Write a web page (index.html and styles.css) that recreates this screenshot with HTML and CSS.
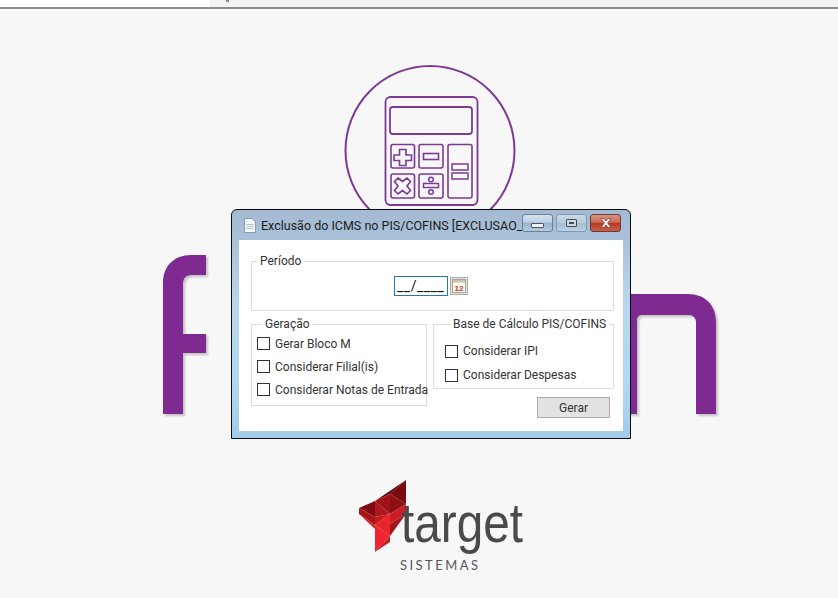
FILE: index.html
```html
<!DOCTYPE html>
<html lang="pt-BR">
<head>
<meta charset="utf-8">
<title>Exclusão do ICMS no PIS/COFINS</title>
<link rel="stylesheet" href="styles.css">
</head>
<body>
<div class="topbar"><div class="topbar-white"></div><div class="topbar-rest"><span class="topbar-mark"></span></div></div>
<svg class="backdrop" width="838" height="598" viewBox="0 0 838 598">
  <defs>
    <filter id="soft" x="-10%" y="-10%" width="125%" height="125%">
      <feDropShadow dx="2" dy="2" stdDeviation="1.2" flood-color="#000" flood-opacity=".22"/>
    </filter>
  </defs>
  <g fill="#7f2a90" filter="url(#soft)">
    <path d="M163 414V283C163 266 174 255 191 255H206V275H192C186 275 183 278 183 284V334H206V353H183V414Z"/>
    <path d="M600 294H688C705 294 716 305 716 322V414H696V322C696 318 693 315 689 315H642C639 315 637 317 637 320V414H600Z"/>
  </g>
  <g fill="none" stroke="#7c3a94">
    <circle cx="430" cy="150.5" r="84.5" stroke-width="2"/>
    <rect x="385.500" y="97" width="92" height="108" rx="5" stroke-width="1.800"/>
    <rect x="390" y="107" width="82" height="27" rx="3" stroke-width="1.800"/>
    <rect x="391" y="144.500" width="23.500" height="23.500" rx="2" stroke-width="1.600"/>
    <rect x="419" y="144.500" width="24" height="23.500" rx="2" stroke-width="1.600"/>
    <rect x="448" y="144.500" width="24" height="53.500" rx="2" stroke-width="1.600"/>
    <rect x="391" y="174" width="23.500" height="24" rx="2" stroke-width="1.600"/>
    <rect x="419" y="174" width="24" height="24" rx="2" stroke-width="1.600"/>
    <path d="M399.500 149.500h6.500v5.500h5.500v5.500h-5.500v5h-6.500v-5h-5.500v-5.500h5.500z" stroke-width="1.600"/>
    <rect x="423.500" y="153.500" width="15" height="6" stroke-width="1.600"/>
    <rect x="452" y="164" width="16" height="6" stroke-width="1.500"/>
    <rect x="452" y="173" width="16" height="6" stroke-width="1.500"/>
    <path d="M398 178l4.500 3.500 4.500-3.500 3.500 3.500-3.500 4.500 3.500 4.500-3.500 3.500-4.500-3.500-4.500 3.500-3.500-3.500 3.500-4.500-3.500-4.500z" stroke-width="1.600"/>
    <rect x="423.500" y="183.500" width="15" height="4" stroke-width="1.500"/>
    <circle cx="431" cy="179.500" r="2.300" stroke-width="1.500"/>
    <circle cx="431" cy="192" r="2.300" stroke-width="1.500"/>
  </g>
  <g>
    <path fill="#7a0a10" d="M406 480V504L390 494Z"/>
    <path fill="#8e0f14" d="M390 494L406 504L390 514Z"/>
    <path fill="#5c0a10" d="M390 494L406 480L375 501Z"/>
    <path fill="#a01218" d="M375 501L390 494V514Z"/>
    <path fill="#7b0c12" d="M359 508L375 501V517Z"/>
    <path fill="#a91419" d="M359 508V514L375 525V517Z"/>
    <path fill="#c41a20" d="M375 517L390 514L375 525Z"/>
    <path fill="#cf1d26" d="M390 514L406 504V514L390 524Z"/>
    <path fill="#b0171c" d="M375 501V517L390 514Z"/>
    <path fill="#e8242c" d="M375 525L390 514V536Z"/>
    <path fill="#d3222a" d="M359 514L375 525V529Z"/>
    <path fill="#a5141a" d="M390 524L406 514L390 536Z"/>
    <path fill="#ef2530" d="M375 525V552L390 536Z"/>
    <path fill="#c91c24" d="M390 536V542L375 552Z"/>
  </g>
  <text class="brand" x="401" y="542" textLength="122" lengthAdjust="spacingAndGlyphs">target</text>
  <text class="brand-sub" x="400" y="570" textLength="78">SISTEMAS</text>
</svg>

<section class="window">
  <header class="titlebar">
    <svg class="doc-icon" width="14" height="15" viewBox="0 0 14 15">
      <path d="M1.500 .5H9L12.500 4V14.500H1.500Z" fill="#f4f7fa" stroke="#8a99a8"/>
      <path d="M3.500 6.500H10.500M3.500 8.500H10.500M3.500 10.500H10.500" stroke="#b3c0cc"/>
    </svg>
    <h1 class="title">Exclusão do ICMS no PIS/COFINS [EXCLUSAO_...</h1>
    <div class="controls">
      <button class="ctl ctl-min"><span class="glyph-min"></span></button>
      <button class="ctl ctl-max"><span class="glyph-max"></span></button>
      <button class="ctl ctl-close">
        <svg width="14" height="10" viewBox="0 0 14 10"><path d="M2 .5H5L7 3 9 .5H12L8.700 5 12 9.500H9L7 7 5 9.500H2L5.300 5Z" fill="#f3eeee" stroke="#7a2d22" stroke-width=".6"/></svg>
      </button>
    </div>
  </header>
  <div class="client">
    <fieldset class="group group-period">
      <legend>Período</legend>
      <div class="date-row">
        <div class="date-input">__/____</div>
        <button class="cal-btn">
          <svg width="14" height="14" viewBox="0 0 14 14">
            <rect x=".5" y=".5" width="13" height="13" fill="#fbf8ee" stroke="#a9a294"/>
            <rect x="1" y="1" width="12" height="2.500" fill="#c9c3b4"/>
            <text class="cal-num" x="7" y="11.500" text-anchor="middle">12</text>
          </svg>
        </button>
      </div>
    </fieldset>
    <div class="columns">
      <fieldset class="group group-geracao">
        <legend>Geração</legend>
        <label class="check"><span class="box"></span>Gerar Bloco M</label>
        <label class="check"><span class="box"></span>Considerar Filial(is)</label>
        <label class="check"><span class="box"></span>Considerar Notas de Entrada</label>
      </fieldset>
      <div class="right-col">
        <fieldset class="group group-base">
          <legend>Base de Cálculo PIS/COFINS</legend>
          <label class="check check-wide"><span class="box"></span>Considerar IPI</label>
          <label class="check check-wide"><span class="box"></span>Considerar Despesas</label>
        </fieldset>
        <button class="action">Gerar</button>
      </div>
    </div>
  </div>
</section>
</body>
</html>
```
FILE: styles.css
```css
* { box-sizing: border-box; }
html, body { margin: 0; height: 100%; }
body {
  position: relative;
  width: 838px;
  height: 598px;
  overflow: hidden;
  background: #f7f7f7;
  font-family: Roboto, "Liberation Sans", sans-serif;
  color: #222;
}
.topbar {
  display: flex;
  height: 9px;
  border-bottom: 2px solid #8b8b8b;
}
.topbar-white { width: 210px; background: #fff; }
.topbar-rest { flex: 1; background: #f2f2f2; padding-left: 16px; }
.topbar-mark { display: block; width: 3px; height: 2px; background: #888; }
.backdrop { position: absolute; left: 0; top: 0; }
.brand {
  font-family: "Liberation Sans", sans-serif;
  font-size: 55px;
  fill: #4a4a4c;
}
.brand-sub {
  font-family: Lato, sans-serif;
  font-size: 13px;
  fill: #56565a;
}
.window {
  position: absolute;
  left: 231px;
  top: 209px;
  width: 400px;
  height: 230px;
  display: flex;
  flex-direction: column;
  padding: 0 7px 7px;
  border: 1px solid #0c0c10;
  border-radius: 6px 6px 0 0;
  background: linear-gradient(180deg, #a3bad2 0, #a9c2da 14%, #b8d6ee 40%, #b2d8f3 75%, #a3cbea 100%);
}
.titlebar {
  display: flex;
  align-items: center;
  height: 30px;
  flex: none;
  padding-left: 4px;
}
.doc-icon { flex: none; }
.title {
  margin: 0 0 0 4px;
  flex: 1;
  font-size: 12.500px;
  font-weight: 400;
  color: #1b1b1b;
  white-space: nowrap;
  overflow: hidden;
}
.controls {
  display: flex;
  gap: 3px;
  margin-top: -4px;
  margin-right: 2px;
}
.ctl {
  display: flex;
  align-items: center;
  justify-content: center;
  height: 18px;
  width: 31px;
  padding: 0;
  border: 1px solid #6d8196;
  border-radius: 3px;
  background: linear-gradient(180deg, #d6e2ec 0, #bcd0e1 45%, #99b3ca 50%, #b3cbde 100%);
}
.ctl-max { border-color: #8198ae; background: linear-gradient(180deg, #c9d9e6 0, #b7cbdc 48%, #a6bfd4 52%, #bcd1e2 100%); }
.ctl-close {
  border-color: #6b3a34;
  background: linear-gradient(180deg, #d79384 0, #c96d5d 45%, #b63a27 52%, #c9604a 100%);
}
.glyph-min {
  width: 13px;
  height: 5px;
  margin-top: 4px;
  border: 1px solid #4c5a68;
  border-radius: 1px;
  background: #eef3f7;
}
.glyph-max {
  width: 11px;
  height: 8px;
  border: 1px solid #3f4c59;
  border-radius: 1px;
  box-shadow: inset 0 0 0 2px #cbd9e5, inset 0 0 0 3px #3f4c59;
}
.client {
  flex: 1;
  padding: 13px 9px 0 12px;
  background: #fff;
}
.group {
  margin: 0;
  padding: 0;
  min-width: 0;
  border: 1px solid #dcdcdc;
}
.group legend {
  margin-left: 5px;
  padding: 0 3px;
  font-size: 12px;
  line-height: 16px;
  color: #333;
}
.group-period { height: 58px; padding-top: 7px; }
.date-row {
  display: flex;
  justify-content: center;
  align-items: center;
  gap: 2px;
  padding-right: 3px;
}
.date-input {
  width: 54px;
  height: 20px;
  border: 1px solid #2277b8;
  padding-left: 2px;
  font-size: 14px;
  line-height: 18px;
  letter-spacing: .5px;
  color: #111;
  background: #fff;
}
.cal-btn {
  display: flex;
  align-items: center;
  justify-content: center;
  width: 18px;
  height: 18px;
  padding: 0;
  border: 1px solid #aaa;
  background: #e4e4e4;
}
.cal-num {
  font-family: "Liberation Sans", sans-serif;
  font-size: 8px;
  font-weight: 700;
  fill: #c8401c;
}
.columns {
  display: flex;
  gap: 6px;
  margin-top: 5px;
  align-items: flex-start;
}
.group-geracao { width: 176px; height: 90px; padding-left: 5px; }
.right-col { width: 181px; display: flex; flex-direction: column; align-items: flex-end; }
.group-base { width: 100%; height: 73px; padding: 7px 0 0 11px; }
.check {
  display: flex;
  align-items: center;
  gap: 5px;
  height: 23px;
  font-size: 12px;
  color: #333;
  white-space: nowrap;
}
.check-wide { height: 24px; }
.box {
  flex: none;
  width: 13px;
  height: 13px;
  border: 1px solid #333;
  background: #fff;
}
.action {
  width: 73px;
  height: 21px;
  margin-top: 8px;
  margin-right: 4px;
  padding: 0;
  border: 1px solid #ababab;
  background: #e2e2e2;
  font-family: inherit;
  font-size: 12px;
  color: #333;
}
```
